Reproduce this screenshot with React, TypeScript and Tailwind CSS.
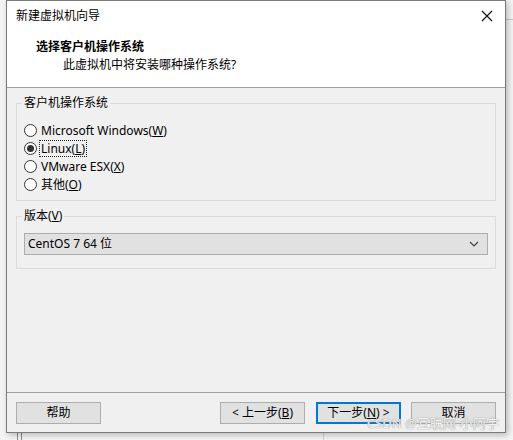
import React from 'react';

const font = { fontFamily: '"Noto Sans", "Noto Sans CJK SC", sans-serif' };

function Radio({ checked, children, focused }: { checked?: boolean; children: React.ReactNode; focused?: boolean }) {
  return (
    <div className="flex items-center h-[18px]">
      <span className="w-[13px] h-[13px] rounded-full border border-[#333] bg-white flex items-center justify-center">
        {checked && <span className="w-[7px] h-[7px] rounded-full bg-[#333]" />}
      </span>
      <span className={`ml-[3px] leading-[15px] px-px ${focused ? 'outline-1 outline-dotted outline-[#222]' : ''}`}>{children}</span>
    </div>
  );
}

function Btn({ children, primary, className = '' }: { children: React.ReactNode; primary?: boolean; className?: string }) {
  return (
    <div
      className={`w-[85px] h-[22px] flex items-center justify-center bg-[#e1e1e1] text-[12px] text-black ${
        primary ? 'border-2 border-[#0078d7]' : 'border border-[#adadad]'
      } ${className}`}
    >
      {children}
    </div>
  );
}

export default function App() {
  return (
    <div className="relative w-[513px] h-[440px] overflow-hidden bg-[#f4f4f4] text-[12px] text-black" style={font}>
      {/* desktop bits behind the dialog */}
      <div className="absolute left-[17px] top-[420px] w-px h-[20px] bg-[#8a8a8a]" />
      <div className="absolute left-[21px] top-[420px] w-px h-[20px] bg-[#8a8a8a]" />
      <div className="absolute left-[323px] top-[420px] w-px h-[20px] bg-[#d0d0d0]" />
      <div className="absolute left-[500px] top-[19px] w-[13px] h-px bg-[#c8c8c8]" />

      {/* dialog */}
      <div className="absolute left-[6px] top-0 w-[500px] h-[433px] border border-[#7a7a7a] bg-[#f0f0f0] flex flex-col shadow-[2px_2px_6px_rgba(0,0,0,0.25)]">
        <div className="h-[87px] bg-white border-b border-[#a0a0a0] relative">
          <div className="absolute left-[9px] top-[7px] leading-[16px]">新建虚拟机向导</div>
          <svg className="absolute right-[12px] top-[9px]" width="12" height="12" viewBox="0 0 12 12">
            <path d="M1 1 L11 11 M11 1 L1 11" stroke="#111" strokeWidth="1.2" />
          </svg>
          <div className="absolute left-[29px] top-[38px] font-bold leading-[16px]">选择客户机操作系统</div>
          <div className="absolute left-[56px] top-[56px] leading-[16px]">此虚拟机中将安装哪种操作系统?</div>
        </div>

        <div className="flex-1 flex flex-col px-[9px] pt-[15px]">
          <div className="relative border border-[#dcdcdc] h-[98px] pl-[7px] pt-[17px]">
            <div className="absolute left-[5px] top-[-9px] bg-[#f0f0f0] px-[2px] leading-[16px]">客户机操作系统</div>
            <Radio>
              Microsoft Windows(<span className="underline">W</span>)
            </Radio>
            <Radio checked focused>
              Linux(<span className="underline">L</span>)
            </Radio>
            <Radio>
              VMware ESX(<span className="underline">X</span>)
            </Radio>
            <Radio>
              其他(<span className="underline">O</span>)
            </Radio>
          </div>

          <div className="relative border border-[#dcdcdc] h-[53px] mt-[15px] pl-[7px] pr-[7px] pt-[16px]">
            <div className="absolute left-[5px] top-[-9px] bg-[#f0f0f0] px-[2px] leading-[16px]">
              版本(<span className="underline">V</span>)
            </div>
            <div className="h-[22px] border border-[#adadad] bg-[#e1e1e1] flex items-center justify-between pl-[3px] pr-[8px]">
              <span>CentOS 7 64 位</span>
              <svg width="10" height="6" viewBox="0 0 10 6">
                <path d="M1 1 L5 5 L9 1" stroke="#444" strokeWidth="1.2" fill="none" />
              </svg>
            </div>
          </div>
        </div>

        <div className="h-[40px] border-t border-[#a0a0a0] flex items-start pt-[9px] px-[9px]">
          <Btn>帮助</Btn>
          <div className="flex-1" />
          <Btn>
            &lt; 上一步(<span className="underline">B</span>)
          </Btn>
          <Btn primary className="ml-[11px]">
            下一步(<span className="underline">N</span>) &gt;
          </Btn>
          <Btn className="ml-[10px]">取消</Btn>
        </div>
      </div>

      {/* watermark */}
      <div
        className="absolute left-[367px] top-[415px] text-[13px] leading-[17px] text-white/85"
        style={{ textShadow: '0 0 1px #999, 0 0 1px #999' }}
      >
        CSDN @互联网-小阿宇
      </div>
    </div>
  );
}
